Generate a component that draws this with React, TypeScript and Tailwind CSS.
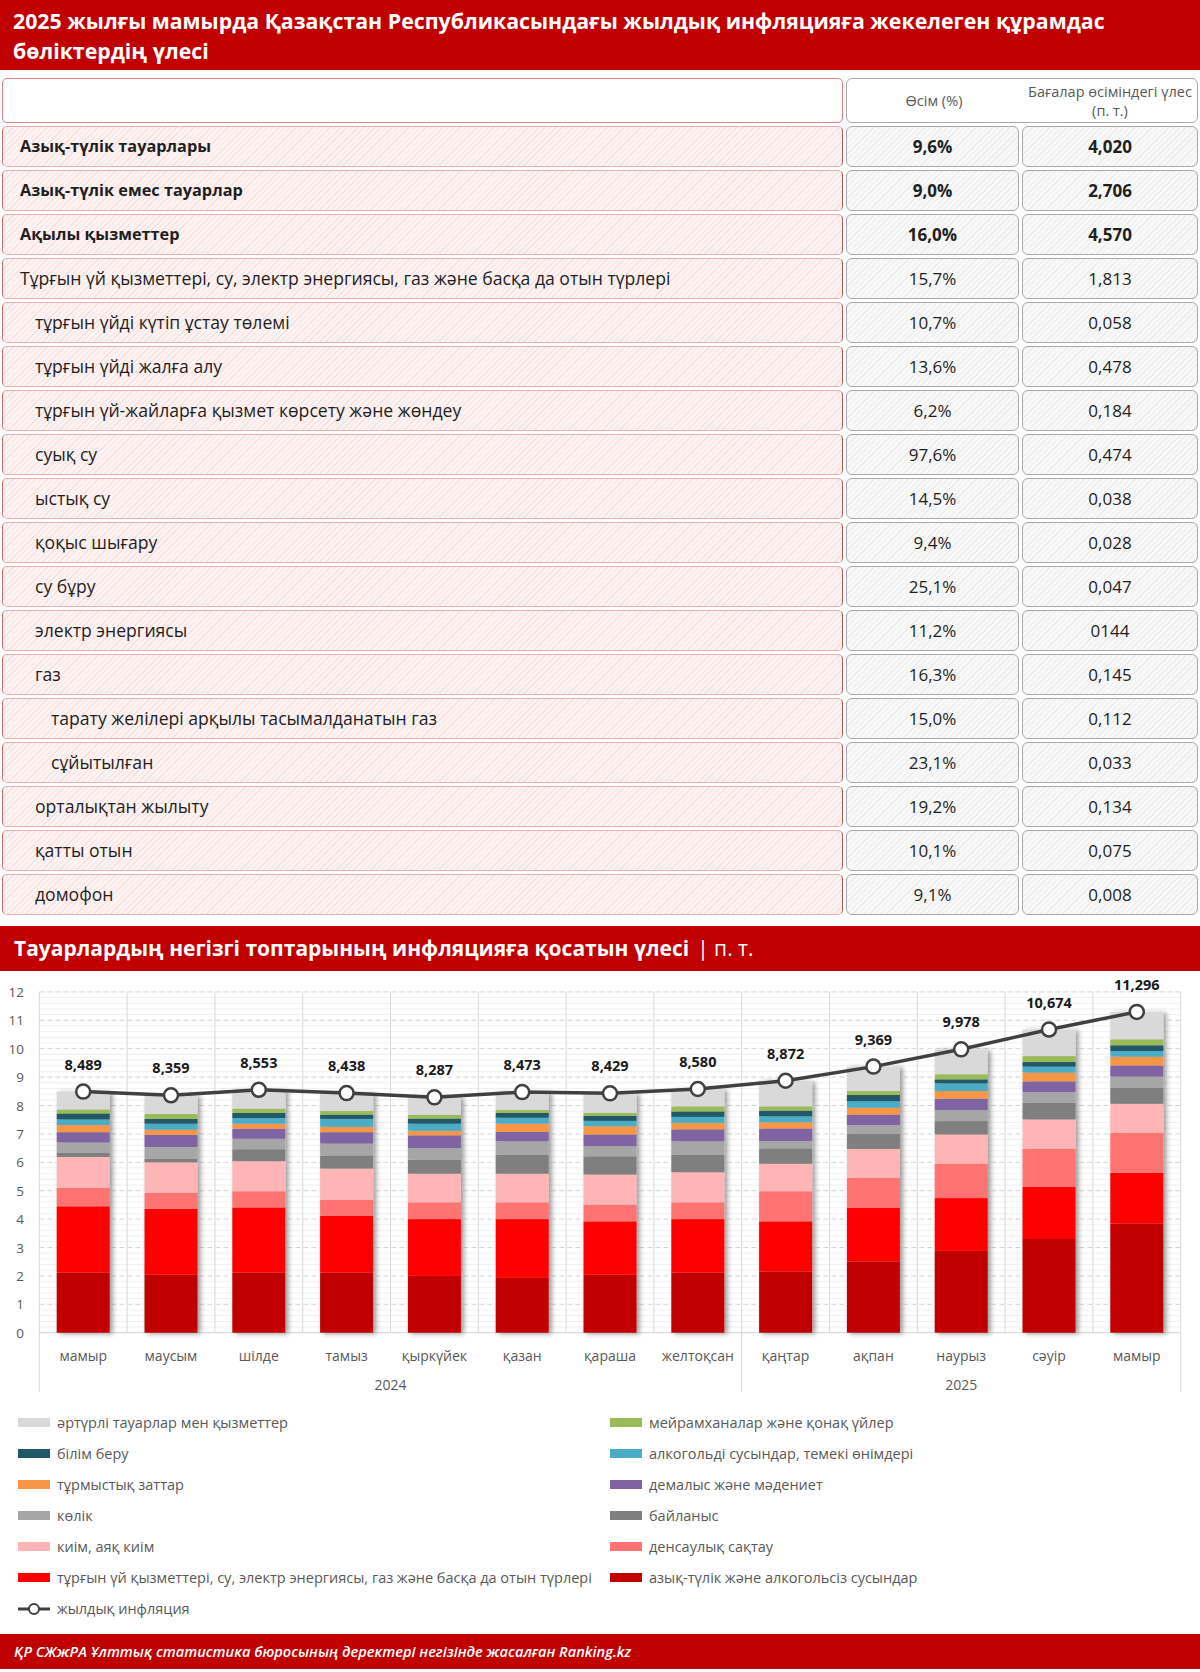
import React from 'react';

type Row = { label: string; growth: string; share: string; bold?: boolean; indent?: 0 | 1 | 2 };

const rows: Row[] = [
  { label: 'Азық-түлік тауарлары', growth: '9,6%', share: '4,020', bold: true },
  { label: 'Азық-түлік емес тауарлар', growth: '9,0%', share: '2,706', bold: true },
  { label: 'Ақылы қызметтер', growth: '16,0%', share: '4,570', bold: true },
  { label: 'Тұрғын үй қызметтері, су, электр энергиясы, газ және басқа да отын түрлері', growth: '15,7%', share: '1,813' },
  { label: 'тұрғын үйді күтіп ұстау төлемі', growth: '10,7%', share: '0,058', indent: 1 },
  { label: 'тұрғын үйді жалға алу', growth: '13,6%', share: '0,478', indent: 1 },
  { label: 'тұрғын үй-жайларға қызмет көрсету және жөндеу', growth: '6,2%', share: '0,184', indent: 1 },
  { label: 'суық су', growth: '97,6%', share: '0,474', indent: 1 },
  { label: 'ыстық су', growth: '14,5%', share: '0,038', indent: 1 },
  { label: 'қоқыс шығару', growth: '9,4%', share: '0,028', indent: 1 },
  { label: 'су бұру', growth: '25,1%', share: '0,047', indent: 1 },
  { label: 'электр энергиясы', growth: '11,2%', share: '0144', indent: 1 },
  { label: 'газ', growth: '16,3%', share: '0,145', indent: 1 },
  { label: 'тарату желілері арқылы тасымалданатын газ', growth: '15,0%', share: '0,112', indent: 2 },
  { label: 'сұйытылған', growth: '23,1%', share: '0,033', indent: 2 },
  { label: 'орталықтан жылыту', growth: '19,2%', share: '0,134', indent: 1 },
  { label: 'қатты отын', growth: '10,1%', share: '0,075', indent: 1 },
  { label: 'домофон', growth: '9,1%', share: '0,008', indent: 1 },
];

const indentCls = ['pl-[17px]', 'pl-[32px]', 'pl-[48px]'];

// series colours, bottom to top
const colors = [
  '#c00000', '#ff0000', '#ff7373', '#ffb5b5', '#7f7f7f', '#a6a6a6',
  '#8064a2', '#f79646', '#4bacc6', '#215968', '#9bbb59', '#d9d9d9',
];

// cumulative tops per month (last value = total inflation)
const tops: number[][] = [
  [2.12, 4.45, 5.1, 6.19, 6.33, 6.7, 7.06, 7.31, 7.51, 7.72, 7.86, 8.489],
  [2.04, 4.36, 4.92, 6.0, 6.12, 6.54, 6.97, 7.15, 7.36, 7.53, 7.7, 8.359],
  [2.12, 4.41, 4.98, 6.04, 6.46, 6.83, 7.18, 7.36, 7.56, 7.74, 7.89, 8.553],
  [2.12, 4.12, 4.68, 5.78, 6.24, 6.66, 7.06, 7.25, 7.53, 7.68, 7.81, 8.438],
  [2.0, 4.0, 4.59, 5.6, 6.09, 6.5, 6.95, 7.11, 7.36, 7.54, 7.67, 8.287],
  [1.93, 4.0, 4.59, 5.6, 6.27, 6.74, 7.07, 7.36, 7.57, 7.74, 7.84, 8.473],
  [2.04, 3.92, 4.51, 5.57, 6.21, 6.57, 6.98, 7.27, 7.46, 7.64, 7.74, 8.429],
  [2.12, 4.0, 4.59, 5.65, 6.27, 6.74, 7.16, 7.39, 7.6, 7.79, 7.97, 8.58],
  [2.15, 3.92, 4.98, 5.95, 6.49, 6.75, 7.19, 7.41, 7.62, 7.82, 7.97, 8.872],
  [2.51, 4.39, 5.45, 6.47, 7.01, 7.31, 7.68, 7.92, 8.15, 8.37, 8.51, 9.369],
  [2.88, 4.74, 5.95, 6.98, 7.45, 7.84, 8.24, 8.51, 8.78, 8.92, 9.1, 9.978],
  [3.3, 5.13, 6.48, 7.51, 8.1, 8.47, 8.85, 9.16, 9.37, 9.53, 9.74, 10.674],
  [3.84, 5.63, 7.04, 8.06, 8.63, 9.02, 9.41, 9.72, 9.92, 10.12, 10.33, 11.296],
];

const months = ['мамыр', 'маусым', 'шілде', 'тамыз', 'қыркүйек', 'қазан', 'қараша', 'желтоқсан', 'қаңтар', 'ақпан', 'наурыз', 'сәуір', 'мамыр'];

const legend: [string, string][] = [
  ['әртүрлі тауарлар мен қызметтер', '#d9d9d9'],
  ['мейрамханалар және қонақ үйлер', '#9bbb59'],
  ['білім беру', '#215968'],
  ['алкогольді сусындар, темекі өнімдері', '#4bacc6'],
  ['тұрмыстық заттар', '#f79646'],
  ['демалыс және мәдениет', '#8064a2'],
  ['көлік', '#a6a6a6'],
  ['байланыс', '#7f7f7f'],
  ['киім, аяқ киім', '#ffb5b5'],
  ['денсаулық сақтау', '#ff7373'],
  ['тұрғын үй қызметтері, су, электр энергиясы, газ және басқа да отын түрлері', '#ff0000'],
  ['азық-түлік және алкогольсіз сусындар', '#c00000'],
];

const LEFT = 39.3;
const STEP = 87.8;
const ZERO = 361.7;
const UNIT = 28.4;
const BAR = 53;
const yv = (v: number) => ZERO - UNIT * v;
const cx = (i: number) => LEFT + STEP * (i + 0.5);
const fmt = (v: number) => v.toFixed(3).replace('.', ',');

function Chart() {
  const right = LEFT + STEP * 13;
  const minor: number[] = [];
  for (let v = 0.2; v < 12; v += 0.2) {
    if (Math.abs(v - Math.round(v)) > 0.05) minor.push(v);
  }
  const points = tops.map((t, i) => `${cx(i)},${yv(t[11])}`).join(' ');
  return (
    <svg width={1200} height={436} className="block">
      <defs>
        <filter id="barShadow" x="-20%" y="-5%" width="150%" height="112%">
          <feDropShadow dx="3" dy="1" stdDeviation="2.5" floodColor="#000" floodOpacity="0.4" />
        </filter>
      </defs>
      {minor.map((v) => (
        <line key={v} x1={LEFT} x2={right} y1={yv(v)} y2={yv(v)} stroke="#f1f1f1" strokeWidth={1} />
      ))}
      {Array.from({ length: 13 }, (_, v) => (
        <g key={v}>
          <line x1={LEFT} x2={right} y1={yv(v)} y2={yv(v)} stroke="#d4d4d4" strokeWidth={1} strokeDasharray={v === 0 ? undefined : '5 3'} />
          <text x={24} y={yv(v) + 5} textAnchor="end" fontSize={13.5} fill="#595959">{v}</text>
        </g>
      ))}
      {Array.from({ length: 14 }, (_, k) => {
        const long = k === 0 || k === 8 || k === 13;
        return (
          <line key={k} x1={LEFT + STEP * k} x2={LEFT + STEP * k} y1={yv(12)} y2={long ? 421 : yv(0)} stroke="#d9d9d9" strokeWidth={1} />
        );
      })}
      {tops.map((t, i) => (
        <g key={i} filter="url(#barShadow)">
          {t.map((top, k) => {
            const bottom = k === 0 ? 0 : t[k - 1];
            return (
              <rect key={k} x={cx(i) - BAR / 2} width={BAR} y={yv(top)} height={yv(bottom) - yv(top)} fill={colors[k]} />
            );
          })}
        </g>
      ))}
      <polyline points={points} fill="none" stroke="#404040" strokeWidth={3.5} strokeLinejoin="round" />
      {tops.map((t, i) => (
        <g key={i}>
          <circle cx={cx(i)} cy={yv(t[11])} r={7} fill="#fff" stroke="#404040" strokeWidth={2.5} />
          <text x={cx(i)} y={yv(t[11]) - 22} textAnchor="middle" fontSize={14.5} fontWeight={700} fill="#1a1a1a">{fmt(t[11])}</text>
        </g>
      ))}
      {months.map((m, i) => (
        <text key={i} x={cx(i)} y={390} textAnchor="middle" fontSize={14} fill="#595959">{m}</text>
      ))}
      <text x={LEFT + STEP * 4} y={419} textAnchor="middle" fontSize={14} fill="#595959">2024</text>
      <text x={LEFT + STEP * 10.5} y={419} textAnchor="middle" fontSize={14} fill="#595959">2025</text>
    </svg>
  );
}

const pinkHatch = 'bg-[image:repeating-linear-gradient(135deg,#fdf3f3_0px,#fdf3f3_3px,#f6e0e0_3px,#f6e0e0_4px)]';
const grayHatch = 'bg-[image:repeating-linear-gradient(135deg,#f8f8f8_0px,#f8f8f8_3px,#ececec_3px,#ececec_4px)]';

export default function App() {
  return (
    <div className="w-[1200px] bg-white font-['Open_Sans','Noto_Sans',sans-serif] text-[#1f1f1f]">
      <div className="h-[70px] bg-[#c00000] px-[13px] pt-[6px] text-[21.3px] font-bold leading-[30px] text-white">
        2025 жылғы мамырда Қазақстан Республикасындағы жылдық инфляцияға жекелеген құрамдас
        <br />
        бөліктердің үлесі
      </div>

      <div className="mt-[8px] grid grid-cols-[841px_173px_176px] gap-[3px] pl-[2px]">
        <div className="h-[45px] rounded-[5px] border border-[#e08080] bg-white" />
        <div className="col-span-2 grid h-[45px] grid-cols-[174px_178px] rounded-[6px] border border-[#a9a9a9] bg-white text-[14.5px] leading-[19px] text-[#595959]">
          <div className="flex items-center justify-center">Өсім (%)</div>
          <div className="flex flex-col items-center justify-center text-center">
            <span>Бағалар өсіміндегі үлес</span>
            <span>(п. т.)</span>
          </div>
        </div>
        {rows.map((r, i) => {
          const weight = r.bold ? 'font-bold text-[16.3px]' : 'font-normal text-[17.6px]';
          const numWeight = r.bold ? 'font-bold' : 'font-normal';
          return (
            <React.Fragment key={i}>
              <div className={`flex h-[41px] items-center rounded-[5px] border border-[#eab0b0] border-l-[#d86a6a] border-r-[#b95a5a] ${pinkHatch} ${indentCls[r.indent ?? 0]} ${weight}`}>
                {r.label}
              </div>
              <div className={`flex h-[41px] items-center justify-center rounded-[6px] border border-[#a9a9a9] text-[17px] ${grayHatch} ${numWeight}`}>
                {r.growth}
              </div>
              <div className={`flex h-[41px] items-center justify-center rounded-[6px] border border-[#a9a9a9] text-[17px] ${grayHatch} ${numWeight}`}>
                {r.share}
              </div>
            </React.Fragment>
          );
        })}
      </div>

      <div className="mt-[11px] flex h-[45px] items-center bg-[#c00000] px-[14px] text-[21px] text-white">
        <span className="font-bold">Тауарлардың негізгі топтарының инфляцияға қосатын үлесі</span>
        <span className="ml-[8px] font-normal">| п. т.</span>
      </div>

      <Chart />

      <div className="grid grid-cols-[592px_1fr] pl-[18px] text-[14.5px] text-[#595959]">
        {legend.map(([name, c]) => (
          <div key={name} className="flex h-[31px] items-center gap-[7px]">
            <span className="h-[9px] w-[32px] shrink-0" style={{ backgroundColor: c }} />
            <span>{name}</span>
          </div>
        ))}
        <div className="flex h-[31px] items-center gap-[7px]">
          <svg width={32} height={14} className="shrink-0">
            <line x1={0} x2={32} y1={7} y2={7} stroke="#404040" strokeWidth={3} />
            <circle cx={16} cy={7} r={5} fill="#fff" stroke="#404040" strokeWidth={2} />
          </svg>
          <span>жылдық инфляция</span>
        </div>
      </div>

      <div className="mt-[10px] flex h-[35px] items-center bg-[#c00000] px-[14px] text-[14.6px] font-semibold italic text-white">
        ҚР СЖжРА Ұлттық статистика бюросының деректері негізінде жасалған Ranking.kz
      </div>
    </div>
  );
}
